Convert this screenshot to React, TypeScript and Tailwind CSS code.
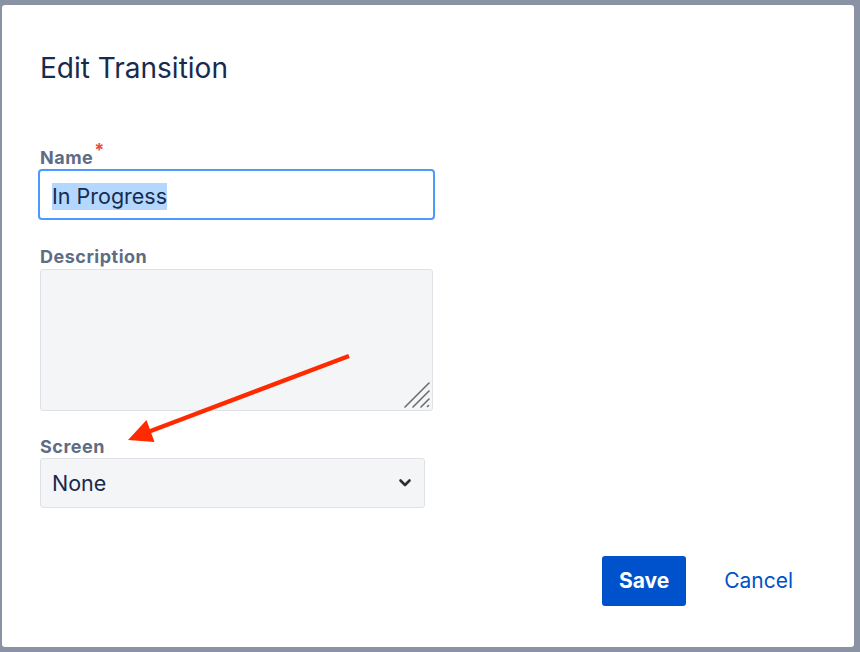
import React from "react";

const font = { fontFamily: "Inter, 'Noto Sans', sans-serif" };

function ResizeGrip() {
  return (
    <svg
      className="pointer-events-none absolute bottom-0 right-0"
      width="30"
      height="30"
      viewBox="0 0 30 30"
    >
      <g stroke="#6b6b6b" strokeWidth="1.6" strokeLinecap="round">
        <line x1="3" y1="27" x2="27" y2="3" />
        <line x1="11" y1="27" x2="27" y2="11" />
        <line x1="19" y1="27" x2="27" y2="19" />
        <line x1="25.5" y1="26.5" x2="26.5" y2="25.5" />
      </g>
    </svg>
  );
}

function Chevron() {
  return (
    <svg width="14" height="10" viewBox="0 0 14 10" className="shrink-0">
      <path
        d="M2.5 2.5 L7 7 L11.5 2.5"
        fill="none"
        stroke="#2f2f2f"
        strokeWidth="2.6"
        strokeLinecap="round"
        strokeLinejoin="round"
      />
    </svg>
  );
}

function Annotation() {
  return (
    <svg
      className="pointer-events-none absolute left-0 top-0"
      width="860"
      height="652"
      viewBox="0 0 860 652"
    >
      <line
        x1="349"
        y1="356"
        x2="148"
        y2="432"
        stroke="#ff2a00"
        strokeWidth="4.5"
      />
      <polygon points="128,440 146.5,420 154.5,442" fill="#ff2a00" />
    </svg>
  );
}

const labelCls =
  "block text-[18px] leading-[20px] font-bold tracking-[0.5px] text-[#5e6c84]";

export default function App() {
  return (
    <div
      className="relative h-[652px] w-[860px] overflow-hidden bg-[#8993a4] pl-[2px] pr-[6px] pt-[5px]"
      style={font}
    >
      <div className="h-[642px] rounded-[3px] bg-white pl-[38px] pt-[47px]">
        <h1 className="text-[28px] leading-[32px] font-normal text-[#172b4d]">
          Edit Transition
        </h1>

        <label className={`mt-[64px] ${labelCls}`}>
          Name
          <span className="relative -top-[8px] ml-[1px] text-[18px] font-bold text-[#ef4a3f]">
            *
          </span>
        </label>
        <div className="-ml-[2px] mt-[1px] flex h-[51px] w-[397px] items-center rounded-[4px] border-2 border-[#4c9aff] bg-white pl-[12px] pt-[3px]">
          <span className="bg-[#b3d7ff] text-[21.5px] leading-[27px] text-[#172b4d]">
            In Progress
          </span>
        </div>

        <label className={`mt-[27px] ${labelCls}`}>Description</label>
        <div className="relative mt-[2px] h-[142px] w-[393px] rounded-[3px] border border-[#dfe1e6] bg-[#f4f5f7]">
          <ResizeGrip />
        </div>

        <label className={`mt-[26px] ${labelCls}`}>Screen</label>
        <div className="mt-[1px] flex h-[50px] w-[385px] items-center justify-between rounded-[3px] border border-[#dfe1e6] bg-[#f4f5f7] pl-[11px] pr-[12px]">
          <span className="text-[21.5px] leading-[27px] text-[#172b4d]">None</span>
          <Chevron />
        </div>

        <div className="mt-[48px] flex items-center justify-end pr-[61px]">
          <button className="h-[50px] w-[84px] rounded-[3px] bg-[#0052cc] text-[21px] font-bold text-white">
            Save
          </button>
          <button className="ml-[38px] text-[21px] text-[#0052cc]">Cancel</button>
        </div>
      </div>
      <Annotation />
    </div>
  );
}
